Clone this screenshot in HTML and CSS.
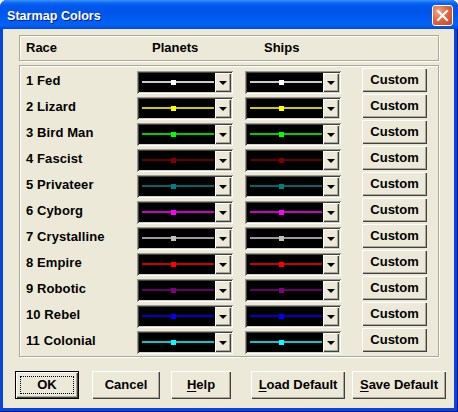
FILE: index.html
```html
<!DOCTYPE html>
<html>
<head>
<meta charset="utf-8">
<title>Starmap Colors</title>
<link rel="stylesheet" href="styles.css">
</head>
<body>
<div class="window">
  <div class="titlebar">
    <span class="title">Starmap Colors</span>
    <div class="close">
      <svg width="13" height="13" viewBox="0 0 13 13"><path d="M2 2 L11 11 M11 2 L2 11" stroke="#fff" stroke-width="2.2" stroke-linecap="square"/></svg>
    </div>
  </div>
  <div class="client">
    <div class="header">
      <span>Race</span><span>Planets</span><span>Ships</span>
    </div>
    <div class="list">
      <div class="row" style="--c:#ffffff"><span class="label">1 Fed</span><div class="combo"><div class="swatch"><i class="line"></i><i class="mark"></i></div><div class="drop"><i class="tri"></i></div></div><div class="combo"><div class="swatch"><i class="line"></i><i class="mark"></i></div><div class="drop"><i class="tri"></i></div></div><button class="btn custom">Custom</button></div>
      <div class="row" style="--c:#ffff00"><span class="label">2 Lizard</span><div class="combo"><div class="swatch"><i class="line"></i><i class="mark"></i></div><div class="drop"><i class="tri"></i></div></div><div class="combo"><div class="swatch"><i class="line"></i><i class="mark"></i></div><div class="drop"><i class="tri"></i></div></div><button class="btn custom">Custom</button></div>
      <div class="row" style="--c:#00ff00"><span class="label">3 Bird Man</span><div class="combo"><div class="swatch"><i class="line"></i><i class="mark"></i></div><div class="drop"><i class="tri"></i></div></div><div class="combo"><div class="swatch"><i class="line"></i><i class="mark"></i></div><div class="drop"><i class="tri"></i></div></div><button class="btn custom">Custom</button></div>
      <div class="row" style="--c:#800000"><span class="label">4 Fascist</span><div class="combo"><div class="swatch"><i class="line"></i><i class="mark"></i></div><div class="drop"><i class="tri"></i></div></div><div class="combo"><div class="swatch"><i class="line"></i><i class="mark"></i></div><div class="drop"><i class="tri"></i></div></div><button class="btn custom">Custom</button></div>
      <div class="row" style="--c:#008080"><span class="label">5 Privateer</span><div class="combo"><div class="swatch"><i class="line"></i><i class="mark"></i></div><div class="drop"><i class="tri"></i></div></div><div class="combo"><div class="swatch"><i class="line"></i><i class="mark"></i></div><div class="drop"><i class="tri"></i></div></div><button class="btn custom">Custom</button></div>
      <div class="row" style="--c:#ff00ff"><span class="label">6 Cyborg</span><div class="combo"><div class="swatch"><i class="line"></i><i class="mark"></i></div><div class="drop"><i class="tri"></i></div></div><div class="combo"><div class="swatch"><i class="line"></i><i class="mark"></i></div><div class="drop"><i class="tri"></i></div></div><button class="btn custom">Custom</button></div>
      <div class="row" style="--c:#c0c0c0"><span class="label">7 Crystalline</span><div class="combo"><div class="swatch"><i class="line"></i><i class="mark"></i></div><div class="drop"><i class="tri"></i></div></div><div class="combo"><div class="swatch"><i class="line"></i><i class="mark"></i></div><div class="drop"><i class="tri"></i></div></div><button class="btn custom">Custom</button></div>
      <div class="row" style="--c:#ff0000"><span class="label">8 Empire</span><div class="combo"><div class="swatch"><i class="line"></i><i class="mark"></i></div><div class="drop"><i class="tri"></i></div></div><div class="combo"><div class="swatch"><i class="line"></i><i class="mark"></i></div><div class="drop"><i class="tri"></i></div></div><button class="btn custom">Custom</button></div>
      <div class="row" style="--c:#800080"><span class="label">9 Robotic</span><div class="combo"><div class="swatch"><i class="line"></i><i class="mark"></i></div><div class="drop"><i class="tri"></i></div></div><div class="combo"><div class="swatch"><i class="line"></i><i class="mark"></i></div><div class="drop"><i class="tri"></i></div></div><button class="btn custom">Custom</button></div>
      <div class="row" style="--c:#0000ff"><span class="label">10 Rebel</span><div class="combo"><div class="swatch"><i class="line"></i><i class="mark"></i></div><div class="drop"><i class="tri"></i></div></div><div class="combo"><div class="swatch"><i class="line"></i><i class="mark"></i></div><div class="drop"><i class="tri"></i></div></div><button class="btn custom">Custom</button></div>
      <div class="row" style="--c:#00ffff"><span class="label">11 Colonial</span><div class="combo"><div class="swatch"><i class="line"></i><i class="mark"></i></div><div class="drop"><i class="tri"></i></div></div><div class="combo"><div class="swatch"><i class="line"></i><i class="mark"></i></div><div class="drop"><i class="tri"></i></div></div><button class="btn custom">Custom</button></div>
    </div>
    <div class="actions">
      <button class="btn action ok"><span class="focus">OK</span></button>
      <button class="btn action cancel">Cancel</button>
      <button class="btn action help"><u>H</u>elp</button>
      <button class="btn action load"><u>L</u>oad Default</button>
      <button class="btn action save"><u>S</u>ave Default</button>
    </div>
  </div>
</div>
</body>
</html>
```

FILE: styles.css
```css
html, body {
  margin: 0;
  padding: 0;
  background: #ffffff;
}

body {
  font-family: "Liberation Sans", Arial, sans-serif;
  font-weight: bold;
  font-size: 13px;
  color: #000;
}

.window {
  width: 458px;
  height: 412px;
  display: flex;
  flex-direction: column;
  background: #0845d8;
  border-radius: 7px 7px 0 0;
  overflow: hidden;
  box-shadow: inset 0 -1px 0 #00138c, inset -1px 0 0 #00138c;
}

.titlebar {
  height: 29px;
  flex: none;
  display: flex;
  justify-content: space-between;
  align-items: flex-start;
  padding: 0 5px 0 7px;
  background: linear-gradient(180deg, #3d95ff 0, #0a66f2 3px, #0058ee 6px, #0055ea 40%, #0162f6 85%, #0257e8 93%, #0346d5 100%);
}

.title {
  color: #fff;
  font-size: 12.6px;
  line-height: 16px;
  margin-top: 8px;
  text-shadow: 1px 1px 0 #0a1a8a;
}

.close {
  width: 21px;
  height: 21px;
  margin-top: 5px;
  box-sizing: border-box;
  border: 1px solid #fff;
  border-radius: 3px;
  background: radial-gradient(circle at 30% 30%, #f0a78e 0, #e0673f 45%, #c8431b 100%);
  display: flex;
  align-items: center;
  justify-content: center;
}

.client {
  flex: 1;
  margin: 0 4px 4px 3px;
  background: #ece9d8;
  padding: 6px 0 0 16px;
  display: flex;
  flex-direction: column;
}

.header {
  width: 420px;
  height: 26px;
  box-sizing: border-box;
  border: 1px solid #aca899;
  box-shadow: 1px 1px 0 #fff, inset 1px 1px 0 #fff;
  display: grid;
  grid-template-columns: 126px 112px auto;
  align-items: center;
  padding: 0 0 1px 6px;
}

.list {
  width: 420px;
  margin-top: 4px;
  box-sizing: border-box;
  border: 1px solid #aca899;
  box-shadow: 1px 1px 0 #fff, inset 1px 1px 0 #fff;
  padding: 3px 0 1px 6px;
  display: flex;
  flex-direction: column;
}

.row {
  height: 26px;
  display: grid;
  grid-template-columns: 99px 96px 96px 74px;
  column-gap: 12px;
  align-items: center;
}

.row .custom {
  margin-left: 9px;
  width: 65px;
  align-self: start;
  margin-top: -1px;
}

.label {
  line-height: 16px;
  margin-top: -2px;
  white-space: nowrap;
  letter-spacing: 0.1px;
}

.combo {
  height: 23px;
  box-sizing: border-box;
  padding: 2px;
  display: flex;
  background: #000;
  box-shadow: inset 1px 1px 0 #9d9a8c, inset -1px -1px 0 #fff, inset 2px 2px 0 #404040, inset -2px -2px 0 #d4d0c8;
}

.swatch {
  flex: 1;
  position: relative;
  background: #000;
  margin-left: 1px;
}

.line {
  position: absolute;
  left: 2px;
  right: 1px;
  top: 8px;
  height: 2px;
  background: var(--c);
  opacity: 0.8;
}

.mark {
  position: absolute;
  left: 31px;
  top: 7px;
  width: 5px;
  height: 5px;
  background: var(--c);
}

.drop {
  width: 16px;
  background: #ece9d8;
  box-shadow: inset 1px 1px 0 #fff, inset -1px -1px 0 #404040, inset -2px -2px 0 #aca899;
  display: flex;
  align-items: center;
  justify-content: center;
}

.tri {
  width: 0;
  height: 0;
  border-left: 4px solid transparent;
  border-right: 4px solid transparent;
  border-top: 4px solid #000;
  margin: 1px 0 0 -1px;
}

.btn {
  font-family: "Liberation Sans", Arial, sans-serif;
  font-weight: bold;
  font-size: 13px;
  color: #000;
  background: #ece9d8;
  border: none;
  padding: 0;
  margin: 0;
  box-sizing: border-box;
  box-shadow: inset 1px 1px 0 #fff, inset -1px -1px 0 #404040, inset -2px -2px 0 #aca899;
  display: flex;
  align-items: center;
  justify-content: center;
}

.custom {
  height: 24px;
  padding-bottom: 1px;
}

.actions {
  display: flex;
  margin-top: 14px;
  margin-left: -4px;
}

.action {
  height: 28px;
  padding-bottom: 1px;
}

.ok {
  width: 64px;
  border: 1px solid #000;
  box-shadow: inset 1px 1px 0 #fff, inset -1px -1px 0 #404040, inset -2px -2px 0 #aca899;
}

.focus {
  border: 1px dotted #000;
  width: 54px;
  height: 18px;
  box-sizing: border-box;
  display: flex;
  align-items: center;
  justify-content: center;
}

.cancel {
  width: 68px;
  margin-left: 13px;
}

.help {
  width: 60px;
  margin-left: 11px;
}

.load {
  width: 94px;
  margin-left: 20px;
}

.save {
  width: 94px;
  margin-left: 7px;
}

u {
  text-decoration: underline;
  text-underline-offset: 2px;
}
```
